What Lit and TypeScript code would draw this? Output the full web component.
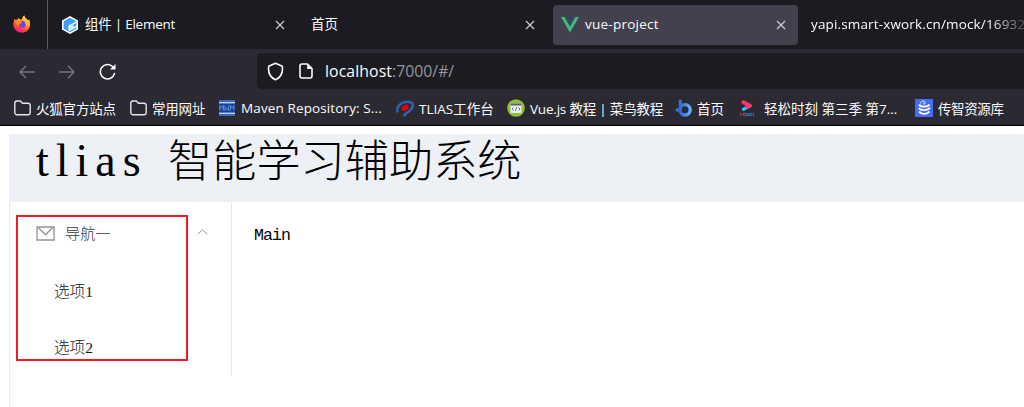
import { LitElement, html, css, TemplateResult } from "lit";
import { customElement } from "lit/decorators.js";

const icons: Record<string, TemplateResult> = {
  firefox: html`<svg width="18" height="18" viewBox="0 0 18 18">
    <defs>
      <linearGradient id="fx" x1=".8" y1="0" x2=".3" y2="1">
        <stop offset="0" stop-color="#fff04a" /><stop offset=".4" stop-color="#ffa722" />
        <stop offset=".7" stop-color="#ff4a3c" /><stop offset="1" stop-color="#e6188c" />
      </linearGradient>
    </defs>
    <path fill="url(#fx)" d="M1.4 3.6 2.2 5 4.8 4.4 5.4 2.8 6.8 4.3 9 4.4 9.4 2.3 11.3.3 12.2 2.6 15 5.2 16.2 4.6C18.8 10.6 15.6 17.7 9 17.7 3.6 17.7.1 13.2.3 8.8Z" />
    <circle cx="9.300" cy="9.200" r="3.500" fill="#7a3ee6" />
    <path fill="#ff8a20" d="M3.600 6.200 9 6.700 8.200 8.200 6.600 9.200 5.400 11.300 3 9Z" />
    <path fill="#ffbd2e" d="M11 5.200 14.500 7.500 14.200 11.500 12.900 9.300Z" />
  </svg>`,
  element: html`<svg width="16" height="18" viewBox="0 0 16 18">
    <path fill="#fff" d="M8 0 16 4.500V13.500L8 18 0 13.500V4.500Z" />
    <path fill="#409eff" d="M8 1.700 14.400 5.300V12.700L8 16.300 1.600 12.700V5.300Z" />
    <path stroke="#fff" stroke-width="1.500" fill="none" d="M14.500 6.200 7.300 10V14.200L15 10.200M8 11.700 11.500 9.800" />
  </svg>`,
  vue: html`<svg width="18" height="16" viewBox="0 0 18 16">
    <path fill="#41b883" d="M0 0H3.700L9 9.200 14.300 0H18L9 15.600Z" />
    <path fill="#35495e" d="M3.700 0H7L9 3.500 11 0H14.300L9 9.200Z" />
  </svg>`,
  close: html`<svg width="10" height="10" viewBox="0 0 10 10" fill="none" stroke="#d0d0d6" stroke-width="1.100"><path d="M1 1 9 9M9 1 1 9" /></svg>`,
  back: html`<svg width="16" height="14" viewBox="0 0 16 14" fill="none" stroke="#77767e" stroke-width="1.400" stroke-linecap="round" stroke-linejoin="round"><path d="M15.200 7H1M6.700 1.200 1 7 6.700 12.800" /></svg>`,
  forward: html`<svg width="16" height="14" viewBox="0 0 16 14" fill="none" stroke="#77767e" stroke-width="1.400" stroke-linecap="round" stroke-linejoin="round"><path d="M.8 7H15M9.300 1.200 15 7 9.300 12.800" /></svg>`,
  reload: html`<svg width="18" height="18" viewBox="0 0 18 18"><path d="M13.800 3.800A7.200 7.200 0 1 0 15.500 10.500" fill="none" stroke="#fbfbfe" stroke-width="1.500" stroke-linecap="round" /><path d="M16.500 1V6.500H11Z" fill="#fbfbfe" /></svg>`,
  shield: html`<svg width="17" height="19" viewBox="0 0 17 19"><path d="M8.500 1.200 15.300 4.200C16 9.700 14.300 15.300 8.500 17.700 2.700 15.300 1 9.700 1.700 4.200Z" fill="none" stroke="#fbfbfe" stroke-width="1.600" stroke-linejoin="round" /></svg>`,
  page: html`<svg width="14" height="16" viewBox="0 0 14 16"><path d="M3 1H8.500L13 5.500V13A2 2 0 0 1 11 15H3A2 2 0 0 1 1 13V3A2 2 0 0 1 3 1Z" fill="none" stroke="#fbfbfe" stroke-width="1.600" stroke-linejoin="round" /><path d="M8.200 1V6H13Z" fill="#fbfbfe" /></svg>`,
  folder: html`<svg width="17" height="16" viewBox="0 0 17 16"><path d="M3 1H6.300L8.500 3.300H14A2.200 2.200 0 0 1 16.200 5.500V12.500A2.200 2.200 0 0 1 14 14.700H3A2.200 2.200 0 0 1 .8 12.500V3.200A2.200 2.200 0 0 1 3 1Z" fill="none" stroke="#e4e4e9" stroke-width="1.400" /></svg>`,
  maven: html`<svg width="16" height="16" viewBox="0 0 16 16">
    <path fill="#3567c4" d="M0 0H16V16H0Z" /><path fill="#c3cbdc" d="M0 2H16V3.200H0ZM0 12.800H16V14H0Z" />
    <path fill="#23408a" d="M0 4H16V12H0Z" />
    <path fill="none" stroke="#5291ec" stroke-width="1" d="M.8 10.500V5.500L2.600 8 4.400 5.500V10.500M6 5.500V10.500L7.800 8 9.600 10.500V5.500M11.400 10.500V5.500L13.200 8 15 5.500V10.500" />
  </svg>`,
  tlias: html`<svg width="18" height="17" viewBox="0 0 18 17">
    <path d="M1.500 12.500C0 4.500 8 .7 14 2 19.500 3.500 16.500 9.500 11 12.800L7.500 16" fill="none" stroke="#2865ad" stroke-width="2.500" />
    <ellipse cx="9" cy="7.800" rx="3.900" ry="2.700" fill="#e60016" transform="rotate(-30 9 7.800)" />
  </svg>`,
  runoob: html`<svg width="18" height="18" viewBox="0 0 18 18">
    <circle cx="9" cy="9" r="8.800" fill="#90bf38" /><path d="M3.500 4.500H14.500V14H3.500Z" fill="#e9eef0" />
    <path d="M3.500 4.500H14.500V6.500H3.500Z" fill="#52636d" />
    <path d="M6.500 8.500 5 10 6.500 11.500M11.500 8.500 13 10 11.500 11.500M9.700 8 8.300 12" fill="none" stroke="#667" stroke-width=".9" />
  </svg>`,
  home: html`<svg width="17" height="18" viewBox="0 0 17 18">
    <defs><linearGradient id="hb" x1="0" x2="1"><stop offset="0" stop-color="#2868dc" /><stop offset="1" stop-color="#62b1fb" /></linearGradient></defs>
    <path d="M5.300.5V11M1 12C2.500 10.500 4 10 5.500 10" fill="none" stroke="#3870dc" stroke-width="3" />
    <circle cx="10" cy="10.800" r="5.200" fill="none" stroke="url(#hb)" stroke-width="3.400" />
  </svg>`,
  youku: html`<svg width="15" height="17" viewBox="0 0 15 17">
    <path d="M4.500 2.300 10.800 5.700" stroke="#ff3568" stroke-width="4" stroke-linecap="round" />
    <path d="M10.500 6 4.500 9.300" stroke="#35b7fa" stroke-width="3.400" stroke-linecap="round" />
    <path d="M8.500 6.800 11 5.500" stroke="#ff3568" stroke-width="3.400" stroke-linecap="round" />
    <path d="M1 13 2 14.300 3 13M2 14.300V16M4.500 13.300H6.500V15.700H4.500Z" fill="none" stroke="#d82c58" />
    <path d="M8 13V15.700H9.700V13M11 13V16M13 13 11.500 14.500 13 16M14.300 13V16" fill="none" stroke="#2784bb" />
  </svg>`,
  czres: html`<svg width="18" height="18" viewBox="0 0 18 18">
    <path fill="#456cf6" d="M0 0H18V18H0Z" />
    <path d="M4 5.500C6 8.700 13 8 14.500 5.500M3.700 9C6 12.200 13 11.500 15 8.800M4 12.500C6.500 16 12.500 15.300 14.300 12.500" fill="none" stroke="#fff" stroke-width="1.900" />
    <path d="M5.300 4.500C5 1.500 10.500 1 10.300 4 9.800 5.700 7.300 5 8.200 3.500" fill="none" stroke="#dce5ff" />
  </svg>`,
  mail: html`<svg width="19" height="15" viewBox="0 0 19 15" fill="none" stroke="#909399" stroke-width="1.300"><path d="M1 1H18V14H1Z" /><path d="M2.500 2 9.500 8.500 16.500 2" /></svg>`,
  up: html`<svg width="11" height="6" viewBox="0 0 11 6" fill="none" stroke="#909399"><path d="M.7 5.200 5.500.9 10.300 5.200" /></svg>`,
};

@customElement("app-root")
export class AppRoot extends LitElement {
  static styles = css`
    :host { display: block; height: 407px; overflow: hidden; background: #fff; font-family: "Open Sans", "Noto Sans CJK SC", sans-serif; white-space: pre; }
    * { box-sizing: border-box; }
    svg { display: block; flex: none; }
    .tabs { height: 49px; display: flex; align-items: center; background: #1c1b22; color: #fbfbfe; font-size: 13.500px; line-height: 20px; overflow: hidden; }
    .pin { width: 48px; height: 49px; padding: 15px 0 0 13px; border-right: 1px solid #5b5a62; flex: none; }
    .tab { height: 40px; display: flex; align-items: center; flex: none; }
    .t1 { width: 255px; padding: 0 18px 0 14px; gap: 7px; letter-spacing: -0.250px; }
    .t2 { width: 250px; padding: 0 18px 0 8px; }
    .t3 { width: 245px; padding: 0 12px 0 8px; gap: 6px; background: #42414d; border-radius: 4px; letter-spacing: 0.250px; }
    .t4 { width: 226px; padding-left: 13px; overflow: hidden; letter-spacing: 0.150px; -webkit-mask-image: linear-gradient(to right, #000 190px, transparent 235px); }
    .label { flex: 1; padding-bottom: 2px; }
    .tools { height: 40px; display: flex; align-items: flex-start; padding-top: 4px; background: #2b2a33; }
    .nav { width: 257px; height: 36px; display: flex; align-items: center; gap: 24px; padding: 2px 0 0 19px; flex: none; }
    .url { flex: 1; height: 36px; display: flex; align-items: center; padding-left: 10px; background: #1c1b22; border-radius: 5px 0 0 5px; font-size: 15.800px; color: #fbfbfe; }
    .page { margin: 0 12px 0 15px; }
    .host { letter-spacing: 0.100px; }
    .dim { color: #96959d; }
    .marks { height: 37px; display: flex; align-items: center; padding: 2px 0 0 14px; background: #2b2a33; border-bottom: 1px solid #000; color: #fbfbfe; font-size: 13.500px; }
    .mark { display: flex; align-items: center; gap: 5px; flex: none; }
    .m0 { width: 116px; } .m1 { width: 89px; } .m2 { width: 177px; letter-spacing: 0.120px; }
    .m3 { width: 111px; } .m4 { width: 168px; letter-spacing: -0.200px; } .m5 { width: 64px; }
    .m0, .m1 { letter-spacing: -0.200px; }
    .m6 { width: 176px; gap: 10px; } .m7 { width: 100px; letter-spacing: -0.400px; }
    .m2 { gap: 6px; }
    .app { margin: 8px 0 0 9px; height: 273px; border-left: 1px solid #eee; border-top: 1px solid #eee; font-family: "Liberation Serif", "Noto Sans CJK SC", serif; position: relative; }
    .head { height: 67px; background: #edf0f5; padding: 1px 0 0 26px; display: flex; align-items: flex-start; color: #000; font-weight: 300; font-size: 44.200px; line-height: 54px; }
    .latin { font-size: 46px; width: 132px; letter-spacing: 7px; line-height: 49px; }
    .body { display: flex; }
    .aside { width: 222px; height: 174px; border-right: 1px solid #e6e6e6; color: #17181b; font-size: 15.600px; font-weight: 300; }
    .title { height: 62px; display: flex; align-items: center; padding: 0 23px 0 26px; gap: 10px; color: #34363b; font-size: 15.300px; }
    .title svg:last-child { margin-bottom: 3px; }
    .item { height: 56px; line-height: 55px; padding-left: 44px; }
    .main { padding: 22px; font-family: "Liberation Mono", monospace; font-size: 16.500px; letter-spacing: -0.900px; line-height: 23px; color: #000; }
    .frame { position: absolute; left: 6px; top: 80px; width: 172px; height: 146px; border: 2px solid #ed1c24; }
  `;

  private marks: [string, string][] = [
    ["folder", "火狐官方站点"],
    ["folder", "常用网址"],
    ["maven", "Maven Repository: S..."],
    ["tlias", "TLIAS工作台"],
    ["runoob", "Vue.js 教程 | 菜鸟教程"],
    ["home", "首页"],
    ["youku", "轻松时刻 第三季 第7..."],
    ["czres", "传智资源库"],
  ];

  render() {
    return html`<div class="tabs"><div class="pin">${icons.firefox}</div><div class="tab t1">${icons.element}<span class="label">组件 | Element</span>${icons.close}</div><div class="tab t2"><span class="label">首页</span>${icons.close}</div><div class="tab t3">${icons.vue}<span class="label">vue-project</span>${icons.close}</div><div class="tab t4"><span class="label">yapi.smart-xwork.cn/mock/16932</span></div></div><div class="tools"><div class="nav">${icons.back}${icons.forward}${icons.reload}</div><div class="url">${icons.shield}<span class="page">${icons.page}</span><span class="host">localhost</span><span class="dim">:7000/#/</span></div></div><div class="marks">${this.marks.map(
      ([icon, text], i) => html`<div class="mark m${i}">${icons[icon]}<span>${text}</span></div>`
    )}</div><div class="app"><div class="head"><span class="latin">tlias </span><span>智能学习辅助系统</span></div><div class="body"><div class="aside"><div class="title">${icons.mail}<span class="label">导航一</span>${icons.up}</div><div class="item">选项1</div><div class="item">选项2</div></div><div class="main">Main</div></div><div class="frame"></div></div>`;
  }
}
